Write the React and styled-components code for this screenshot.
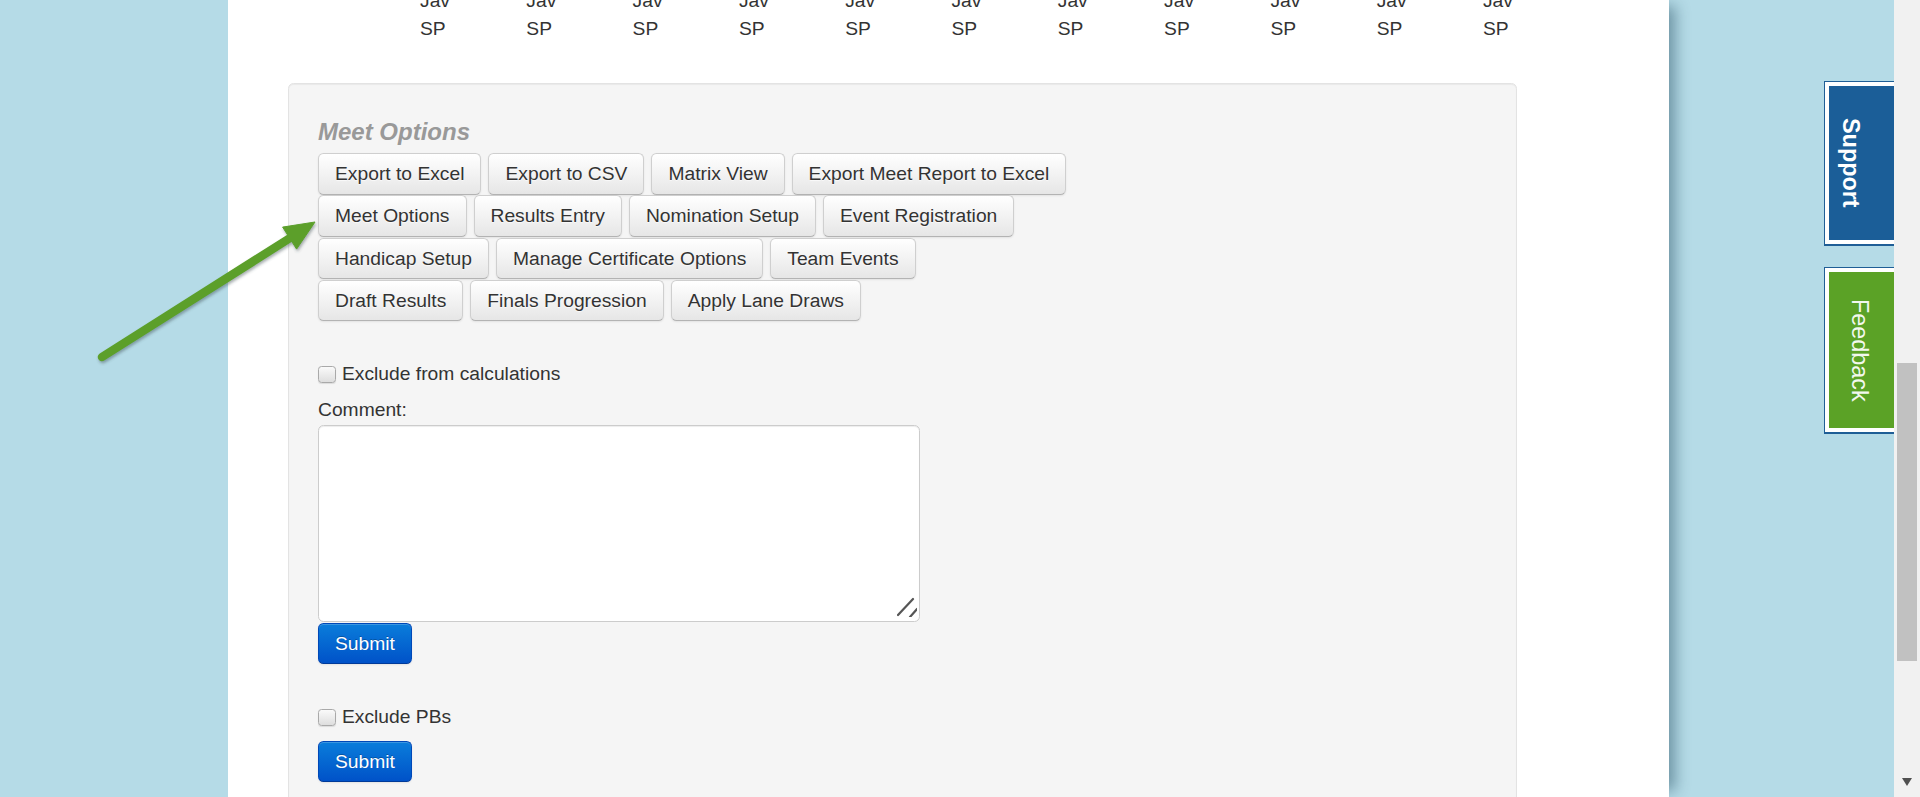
import React from 'react';
import styled, { createGlobalStyle } from 'styled-components';

const buttonRows = [
  ['Export to Excel', 'Export to CSV', 'Matrix View', 'Export Meet Report to Excel'],
  ['Meet Options', 'Results Entry', 'Nomination Setup', 'Event Registration'],
  ['Handicap Setup', 'Manage Certificate Options', 'Team Events'],
  ['Draft Results', 'Finals Progression', 'Apply Lane Draws'],
];

const columns = Array.from({ length: 11 });

function App() {
  return (
    <>
      <GlobalStyle />
      <Frame>
        <Viewport>
          <Sheet>
            <Codes>
              <CodeRow>
                {columns.map((_, i) => (
                  <CodeCell key={'j' + i}>Jav</CodeCell>
                ))}
              </CodeRow>
              <CodeRow>
                {columns.map((_, i) => (
                  <CodeCell key={'s' + i}>SP</CodeCell>
                ))}
              </CodeRow>
            </Codes>

            <Well>
              <WellTitle>Meet Options</WellTitle>
              <ButtonStack>
                {buttonRows.map((row, r) => (
                  <ButtonRow key={r}>
                    {row.map(label => (
                      <Btn key={label}>{label}</Btn>
                    ))}
                  </ButtonRow>
                ))}
              </ButtonStack>

              <CheckLine $top="39px">
                <CheckBox type="checkbox" />
                Exclude from calculations
              </CheckLine>
              <FieldLabel>Comment:</FieldLabel>
              <AreaWrap>
                <CommentArea />
                <Grip viewBox="0 0 20 20" width="20" height="20">
                  <line x1="16" y1="2" x2="1" y2="18" />
                  <line x1="20" y1="12" x2="13" y2="20" />
                </Grip>
              </AreaWrap>
              <Btn $primary $top="1px">Submit</Btn>

              <CheckLine $top="39px">
                <CheckBox type="checkbox" />
                Exclude PBs
              </CheckLine>
              <Btn $primary $top="10px">Submit</Btn>
            </Well>
          </Sheet>

          <Pointer viewBox="0 0 240 160" width="240" height="160">
            <defs>
              <filter id="arrowShadow" x="-20%" y="-20%" width="140%" height="140%">
                <feDropShadow dx="1" dy="2" stdDeviation="1.6" floodColor="#3b4a50" floodOpacity="0.45" />
              </filter>
            </defs>
            <g filter="url(#arrowShadow)" fill="#5b9f2b" stroke="#5b9f2b">
              <line x1="12" y1="147" x2="200" y2="28" strokeWidth="8.5" strokeLinecap="round" />
              <polygon points="225,12 206.6,39.1 192.6,17.1" strokeWidth="1" strokeLinejoin="round" />
            </g>
          </Pointer>

          <SideTab $top="81px" $height="164px" $fill="#1b5e98" $pad="12px">
            <TabText $bold>Support</TabText>
          </SideTab>
          <SideTab $top="267px" $height="166px" $fill="#5ba226" $pad="21px">
            <TabText>Feedback</TabText>
          </SideTab>
        </Viewport>

        <ScrollBar>
          <Thumb />
          <ScrollArrow>
            <svg viewBox="0 0 10 8" width="10" height="8">
              <polygon points="0,0 10,0 5,8" fill="#505050" />
            </svg>
          </ScrollArrow>
        </ScrollBar>
      </Frame>
    </>
  );
}

export default App;

const GlobalStyle = createGlobalStyle`
  html, body {
    margin: 0;
    padding: 0;
    height: 100%;
    overflow: hidden;
  }
  body {
    background: #b5dbe7;
    font-family: "Liberation Sans", Arial, Helvetica, sans-serif;
    color: #333;
  }
`;

const Frame = styled.div`
  display: flex;
  height: 100vh;
`;

const Viewport = styled.div`
  position: relative;
  flex: 1;
  overflow: hidden;
  padding-left: 228px;
  background: #b5dbe7;
`;

const Sheet = styled.div`
  width: 1441px;
  height: 100%;
  background: #fff;
  box-shadow: 12px 0 14px -6px rgba(20, 60, 80, 0.45);
  overflow: hidden;
`;

const Codes = styled.div`
  display: flex;
  flex-direction: column;
  margin-top: -13.5px;
  padding-left: 192px;
`;

const CodeRow = styled.div`
  display: flex;
`;

const CodeCell = styled.div`
  width: 106.3px;
  font-size: 19.25px;
  line-height: 28.8px;
  color: #333;
`;

const Well = styled.div`
  margin: 39px 0 0 60px;
  width: 1229px;
  min-height: 900px;
  box-sizing: border-box;
  padding: 34px 29px;
  background: #f5f5f5;
  border: 1px solid #e3e3e3;
  border-radius: 5.5px;
  box-shadow: inset 0 1px 1px rgba(0, 0, 0, 0.05);
`;

const WellTitle = styled.h4`
  margin: 0 0 7.5px;
  font-size: 24px;
  line-height: 27.5px;
  font-weight: bold;
  font-style: italic;
  color: #999;
`;

const ButtonStack = styled.div`
  display: flex;
  flex-direction: column;
  gap: 0.75px;
`;

const ButtonRow = styled.div`
  display: flex;
  gap: 7px;
`;

const Btn = styled.button`
  display: block;
  margin-top: ${({ $top }) => $top || '0'};
  padding: 6px 16px;
  font-family: "Liberation Sans", Arial, Helvetica, sans-serif;
  font-size: 19.25px;
  line-height: 27.5px;
  border-radius: 5.5px;
  cursor: pointer;
  white-space: nowrap;
  color: ${({ $primary }) => ($primary ? '#fff' : '#333')};
  text-shadow: ${({ $primary }) =>
    $primary ? '0 -1px 0 rgba(0, 0, 0, 0.25)' : '0 1px 1px rgba(255, 255, 255, 0.75)'};
  background: ${({ $primary }) =>
    $primary
      ? 'linear-gradient(to bottom, #0a7ddb, #0052c8)'
      : 'linear-gradient(to bottom, #ffffff, #e6e6e6)'};
  border: 1px solid ${({ $primary }) => ($primary ? '#0048b8' : '#cfcfcf')};
  border-bottom-color: ${({ $primary }) => ($primary ? '#003a99' : '#b3b3b3')};
  box-shadow: inset 0 1px 0 rgba(255, 255, 255, 0.2), 0 1px 2px rgba(0, 0, 0, 0.08);
`;

const CheckLine = styled.label`
  display: flex;
  align-items: center;
  gap: 6px;
  margin-top: ${({ $top }) => $top};
  font-size: 19.25px;
  line-height: 27.5px;
  color: #333;
`;

const CheckBox = styled.input`
  appearance: none;
  margin: 0;
  width: 18px;
  height: 17px;
  border: 1px solid #a9a9a9;
  border-radius: 3.5px;
  background: linear-gradient(to bottom, #fafafa, #dedede);
  box-shadow: 0 1px 1px rgba(0, 0, 0, 0.1);
`;

const FieldLabel = styled.div`
  margin-top: 8.5px;
  font-size: 19.25px;
  line-height: 27.5px;
  color: #333;
`;

const AreaWrap = styled.div`
  position: relative;
  width: 602px;
  margin-top: 1px;
`;

const CommentArea = styled.textarea`
  display: block;
  box-sizing: border-box;
  width: 602px;
  height: 197px;
  margin: 0;
  resize: none;
  background: #fff;
  border: 1px solid #ccc;
  border-radius: 5.5px;
  box-shadow: inset 0 1px 1px rgba(0, 0, 0, 0.075);
`;

const Grip = styled.svg`
  position: absolute;
  right: 3px;
  bottom: 5px;
  pointer-events: none;

  line {
    stroke: #555;
    stroke-width: 2.2;
    stroke-linecap: round;
  }
`;

const Pointer = styled.svg`
  position: absolute;
  left: 90px;
  top: 210px;
  overflow: visible;
  pointer-events: none;
`;

const SideTab = styled.div`
  position: absolute;
  top: ${({ $top }) => $top};
  right: -8px;
  width: 78px;
  height: ${({ $height }) => $height};
  box-sizing: border-box;
  display: flex;
  align-items: center;
  padding-left: ${({ $pad }) => $pad};
  background: ${({ $fill }) => $fill};
  border: 1px solid #1f5e96;
  box-shadow: inset 0 0 0 4px #fff, 0 1px 0 #1f5e96;
`;

const TabText = styled.span`
  writing-mode: vertical-rl;
  font-family: Arial, "Liberation Sans", sans-serif;
  font-size: 23.4px;
  line-height: 28px;
  font-weight: ${({ $bold }) => ($bold ? 'bold' : 'normal')};
  color: ${({ $bold }) => ($bold ? '#fff' : '#f2f8ee')};
`;

const ScrollBar = styled.div`
  width: 26px;
  display: flex;
  flex-direction: column;
  background: #f1f1f1;
`;

const Thumb = styled.div`
  margin: 363px 3px 0;
  height: 298px;
  background: #c1c1c1;
`;

const ScrollArrow = styled.div`
  margin-top: auto;
  height: 30px;
  display: flex;
  align-items: center;
  justify-content: center;
`;
